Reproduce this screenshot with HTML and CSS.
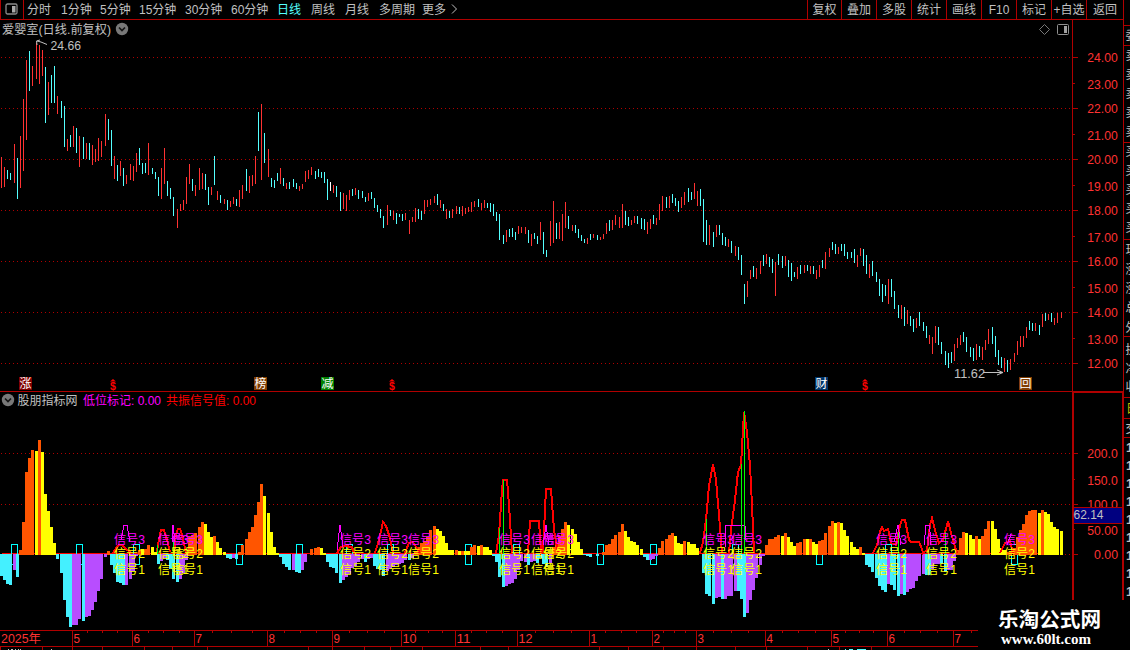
FILE: index.html
```html
<!DOCTYPE html>
<html lang="zh">
<head>
<meta charset="utf-8">
<title>爱婴室 日线</title>
<link rel="stylesheet" href="styles.css">
</head>
<body>
<div class="app">
  <div class="main">
    <header class="toolbar">
      <div class="toggle"><svg width="14" height="12" viewBox="0 0 14 12"><rect x="1" y="1" width="11" height="10" rx="1.5" fill="none" stroke="#8a8a8a" stroke-width="1.3"/><rect x="7" y="3" width="3.5" height="6.5" fill="#aaa"/></svg></div>
      <nav class="periods">
        <span class="p2">分时</span><span class="p3">1分钟</span><span class="p3">5分钟</span><span class="p4">15分钟</span><span class="p4">30分钟</span><span class="p4">60分钟</span><span class="p2 active">日线</span><span class="p2">周线</span><span class="p2">月线</span><span class="p5">多周期</span><span class="p6">更多</span><svg width="7" height="11" viewBox="0 0 7 11"><path d="M1 .5L5.5 5L1 9.5" fill="none" stroke="#c0c0c0"/></svg>
      </nav>
      <div class="actions"><span>复权</span><span>叠加</span><span>多股</span><span>统计</span><span>画线</span><span>F10</span><span>标记</span><span>+自选</span><span>返回</span></div>
    </header>
    <svg class="chart" id="price" width="1123" height="371" viewBox="0 20 1123 371"></svg>
    <svg class="chart" id="indicator" width="1123" height="259" viewBox="0 391 1123 259"></svg>
  </div>
  <svg class="chart" id="side" width="7" height="650" viewBox="1123 0 7 650"></svg>
</div>
<script src="chart.js"></script>
</body>
</html>
```

FILE: styles.css
```css
body {
  margin: 0;
  background: #000;
  overflow: hidden;
}
.app {
  display: flex;
  width: 1130px;
  height: 650px;
  font: 12px "Liberation Sans", "Noto Sans CJK SC", sans-serif;
  color: #c0c0c0;
}
.main {
  display: flex;
  flex-direction: column;
  width: 1123px;
}
.toolbar {
  display: flex;
  box-sizing: border-box;
  height: 20px;
  border-bottom: 1px solid #b00000;
  line-height: 20px;
  white-space: nowrap;
}
.toggle {
  display: flex;
  box-sizing: border-box;
  width: 24px;
  padding: 3px 0 0 4px;
  border-left: 1px solid #b00000;
  border-right: 1px solid #b00000;
}
.periods {
  display: flex;
  flex: 1;
  padding-left: 3px;
}
.periods svg { margin-top: 4px; }
.p2 { width: 34px; }
.p3 { width: 39px; }
.p4 { width: 46px; }
.p5 { width: 43px; }
.p6 { width: 29px; }
.active { color: #54ffff; }
.actions { display: flex; }
.actions span {
  box-sizing: border-box;
  width: 35px;
  height: 19px;
  border-left: 1px solid #b00000;
  text-align: center;
}
.actions span:first-child { width: 34px; }
.actions span:last-child { width: 37px; }
.chart {
  display: block;
  flex: none;
}
.dots {
  stroke: #b00000;
  stroke-dasharray: 1 3;
}
.num { font-size: 13px; }
.tick { font: bold 13px "Liberation Sans", sans-serif; }
.crisp { shape-rendering: crispEdges; }
.mark {
  font: bold 20.6px "Noto Sans CJK SC", sans-serif;
}
.site {
  font: bold 14.5px "Liberation Serif", serif;
}
```

FILE: chart.js
```js
// Daily ranges: colour, x, top, bottom
const candles = `r1,157,188 r4,167,187 c7,170,179 c10,173,180 r14,144,183 c17,158,199 r20,136,188 r23,99,171 r26,60,140 c29,51,91 r32,66,86 r36,43,79 r39,45,84 r42,50,76 c45,67,123 r48,82,115 c51,75,103 c54,66,103 r57,96,114 c61,101,118 c64,106,147 r67,139,151 c70,135,147 r73,126,147 c76,128,153 r79,136,167 c83,137,159 r86,143,159 c89,143,160 r92,145,165 r95,149,162 r98,138,161 r101,141,157 r105,114,146 c108,119,140 c111,130,166 r114,156,179 c117,165,181 r120,161,176 c123,168,186 r126,175,184 r130,164,180 r133,166,181 r136,153,172 c139,148,165 c142,163,174 c145,163,173 r148,143,175 c152,168,174 c155,172,179 c158,177,196 r161,168,199 r164,148,184 c167,181,196 c170,188,199 c173,197,216 r177,209,228 r180,204,211 r183,200,210 r186,177,204 r189,164,184 c192,179,191 r195,185,196 r199,168,190 r202,173,189 c205,174,190 c208,187,205 r211,187,195 c214,156,185 r217,191,200 c220,195,203 r224,199,204 c227,200,210 r230,201,207 r233,197,204 c236,199,206 r239,190,207 r242,185,199 c246,169,191 r249,176,193 r252,175,186 r255,156,184 c258,112,151 r261,104,180 c264,133,163 r268,149,177 c271,178,187 c274,180,188 c277,173,181 r280,168,184 c283,178,186 r286,183,189 c289,182,189 c293,179,187 c296,183,189 r299,186,191 r302,184,189 r305,171,182 r308,170,179 r311,167,175 c315,171,179 c318,169,177 c321,172,178 c324,172,183 c327,179,200 w330,182,191 r333,185,193 c336,186,197 c340,192,211 r343,193,209 r346,195,211 r349,190,200 c352,189,196 r355,188,195 c358,190,199 c362,191,198 c365,197,202 r368,193,201 c371,192,199 c374,198,208 c377,205,212
c380,209,218 c383,216,228 r387,205,225 c390,210,216 r393,211,220 c396,213,224 c399,214,217 c402,214,221 r405,213,220 r409,220,234 r412,217,222 r415,208,222 c418,209,219 c421,211,220 r424,200,214 r427,200,207 r430,199,205 r434,196,203 c437,194,205 r440,200,208 c443,204,211 r446,209,219 c449,211,218 r452,209,218 r456,206,214 c459,207,214 r462,206,216 r465,208,214 r468,207,212 r471,202,212 r474,201,207 c478,199,207 r481,203,210 r484,200,208 c487,203,208 c490,203,212 c493,204,216 c496,212,221 c499,214,240 c503,235,244 r506,230,242 c509,229,237 c512,228,237 c515,232,240 r518,226,234 r521,227,233 r525,227,234 c528,230,243 r531,234,246 c534,233,239 c537,236,244 r540,222,240 c543,232,254 c546,250,257 r550,221,246 r553,201,243 c556,223,239 r559,222,239 r562,214,241 r565,202,228 c568,216,229 r572,225,231 c575,225,233 c578,229,238 c581,235,241 c584,239,243 r587,238,244 c590,234,240 r593,234,238 c597,235,240 r600,237,240 r603,234,239 r606,223,234 c609,220,231 r612,220,230 r615,215,225 r619,217,228 r622,204,228 c625,211,225 c628,217,226 r631,220,225 r634,216,223 c637,216,224 c641,218,229 c644,219,230 r647,222,234 r650,219,229 c653,215,224 r656,218,225 r659,204,220 r662,196,211 c666,197,208 r669,196,208 c672,194,203 c675,198,206 c678,201,212 r681,197,208 r684,192,205 c688,188,202 c691,192,200 r694,183,199 r697,191,206 c700,189,206 c703,199,242 c706,220,245 r709,225,245 c713,232,247 r716,225,237 c719,225,235 c722,233,245 c725,237,246 r728,239,247 c731,241,253 r735,246,256
c738,247,260 c741,255,275 c744,284,304 r747,281,297 r750,270,279 c753,266,277 r756,268,279 r760,261,274 c763,255,266 r766,254,264 c769,257,267 c772,259,273 r775,262,296 c778,254,265 c782,256,268 r785,256,266 c788,260,277 c791,263,281 c794,272,277 r797,267,279 c800,265,274 r804,265,273 c807,265,271 r810,266,274 c813,266,274 r816,270,279 r819,265,277 c822,260,268 r825,252,269 r829,248,257 c832,242,250 c835,244,254 r838,247,254 c841,244,251 c844,244,256 c847,252,259 c851,252,258 c854,249,263 r857,255,267 r860,248,256 c863,249,266 c866,255,274 r869,264,278 c872,261,276 c876,272,282 c879,279,296 c882,284,302 c885,285,296 r888,279,304 c891,279,297 c894,291,309 c898,305,318 r901,305,319 c904,307,326 r907,310,324 c910,316,326 c913,319,332 r916,318,328 c919,312,326 c923,322,331 c926,326,338 r929,335,344 r932,337,354 r935,326,343 c938,327,345 c941,342,354 c945,351,365 c948,353,368 c951,352,363 r954,344,361 r957,338,348 r960,335,345 c963,332,342 c966,337,352 c970,347,357 c973,348,361 r976,344,360 c979,346,357 r982,347,360 r985,340,350 r988,329,344 c992,327,344 c995,336,357 c998,350,365 c1001,357,368 r1004,358,372 c1007,360,372 r1010,359,370 r1014,353,362 r1017,341,355 r1020,336,347 r1023,336,347 r1026,327,338 c1029,321,330 c1032,323,331 r1035,323,331 c1039,325,335 r1042,314,327 c1045,313,321 r1048,314,320 c1051,313,322 r1054,318,325 r1057,313,323 r1061,312,318`;

// Histogram: colour, x, far end (o/y rise above zero, c/p fall below)
const bars = `c1,576 c4,580 c7,584 c10,585 p14,570 c17,577 o20,550 o23,522 o26,472 o29,458 o32,450 y36,451 o39,440 y42,452 y45,494 y48,511 y51,527 y54,543 c57,559 c61,573 c64,600 c67,617 c70,627 p73,625 p76,625 p79,619 c83,621 p86,617 p89,616 p92,610 p95,602 p98,591 p101,579 p105,557 o108,551 c111,565 c114,573 c117,582 c120,583 c123,585 p126,585 p130,579 p133,571 p136,556 o139,550 y142,549 o145,549 o148,545 y152,547 y155,552 c158,564 p161,561 p164,558 c167,560 c170,569 c173,579 c177,582 p180,579 p183,573 p186,560 o189,537 o192,535 o195,533 o199,527 o202,522 y205,524 y208,532 y211,537 o214,536 y217,542 y220,548 y224,552 c227,558 c230,559 p233,558 c236,559 o239,552 o242,545 o246,539 o249,532 o252,527 o255,515 o258,502 o261,484 y264,496 y268,513 y271,532 y274,547 y277,553 c280,557 c283,564 c286,567 c289,570 p293,570 c296,572 c299,573 p302,570 p305,562 o311,549 o315,548 o318,547 y321,548 y324,553 c327,562 c330,567 c333,568 c336,573 c340,583 p343,580 p346,577 p349,574 p352,568 p355,566 p358,562 p362,559 c365,562 p368,559 p371,558 c374,566 c377,569 c380,570 c383,576 p387,571 p390,569 p393,567 p396,565 p399,564 p402,563 p405,560 c409,560 p412,558 o415,551 o418,547 o421,543 o424,541 o427,537 o430,530 o434,526 y437,529 y440,531 y443,536 y446,543 y449,550 y452,550 o456,550 y459,551 o462,551 y465,551 y468,551 o471,547 o474,545 y478,546 o481,545 y484,547 y487,547 y490,550 c493,556 c496,562 c499,577 c503,587 p506,586 p509,584 p512,583 p515,579 p518,570 p521,561 p525,562 c528,565 p531,562 p534,561 c537,563 c540,558 c543,564 c546,567 p550,563 o553,547 o556,543 o559,537 o562,529 o565,522 y568,525 y572,529 y575,534 y578,542 y581,549 c584,555 c587,556 c590,557 c597,556 o603,552 o606,545 o609,544 o612,539 o615,535 o619,532 o622,524 y625,531 y628,537 y631,541 y634,542 y637,545 y641,549 c644,557 c647,560 p650,560 p653,559 p656,556 o659,548 o662,541 o666,539 o669,535 o672,533 y675,536 y678,543 y681,544 o684,541 y688,542 y691,544 y694,544 y697,548 c703,573 c706,594 c709,596 c713,604 p716,598 p719,597 c722,599 p725,599 p728,596 p731,596 p735,591 c738,591 c741,599 c744,617 p747,613 p750,600 p753,590 p756,578 p760,565 p763,556 o766,545 o769,539 o772,539 o775,537 o778,535 y782,536 o785,533 y788,537 y791,542 y794,546 o797,543 o800,542 o804,539 y807,539 o810,539 y813,542 y816,544 o819,541 o822,540 o825,533 o829,526 o832,521 y835,523 o838,522 y841,523 y844,530 y847,536 y851,542 y854,547 y857,549 o860,547 y863,553 c866,565 c869,567 c872,572 c876,578 c879,586 c882,590 c885,592 p888,584 c891,585 c894,590 c898,596 p901,594 c904,595 p907,592 p910,589 p913,588 p916,581 p919,576 p923,574 c926,575 c929,575 p932,569 p935,564 p938,564 c941,564 c945,572 p948,570 p951,570 p954,561 o957,550 o960,538 o963,532 y966,533 y970,535 y973,539 o976,536 y979,539 o982,536 o985,529 o988,521 y992,521 y995,529 y998,539 y1001,548 y1004,550 o1007,552 o1010,551 o1014,548 o1017,537 o1020,530 o1023,524 o1026,515 o1029,511 o1032,510 o1035,510 y1039,513 o1042,510 y1045,512 y1048,514 y1051,522 y1054,527 y1057,529 y1061,531`;

const parse = s => s.split(/\s+/).map(t => [t[0], ...t.slice(1).split(',').map(Number)]);
const box = (x, y, w, h, f) => `<rect x="${x}" y="${y}" width="${w}" height="${h}" fill="${f}"/>`;
const frame = (x, y, w, h) => box(x, y, w, h, '#b00000');
const text = (x, y, s, f, w, c = '') =>
  `<text x="${x}" y="${y}" fill="${f}" class="${c}"${w ? ` textLength="${w}" lengthAdjust="spacingAndGlyphs"` : ''}>${s}</text>`;
const dots = (y, x = 1) => `<line class="dots" x1="${x}" y1="${y}.5" x2="1071" y2="${y}.5"/>`;
const line = (pts, c, w = 1) => `<polyline points="${pts}" fill="none" stroke="${c}" stroke-width="${w}"/>`;
const chevron = (x, y) =>
  `<circle cx="${x}" cy="${y}" r="6.2" fill="#787878"/><path d="M${x - 3} ${y - 1.5}l3 3l3 -3" fill="none" stroke="#151515" stroke-width="1.7"/>`;
const RED = '#ff3232', GREY = '#c0c0c0';

// Price panel
let p = '<g class="crisp">';
for (let k = 0; k < 7; k++) {
  const y = 57 + 51 * k;
  p += dots(y) + frame(1073, y, 5, 1);
  if (k < 6) p += frame(1073, y + 26, 2, 1);
}
const cc = { r: RED, c: '#54ffff', w: '#fff' };
for (const [c, x, a, b] of parse(candles)) p += box(x, a, 1, b - a, cc[c]);
p += frame(1072, 20, 1, 371) + '</g>';
for (let k = 0; k < 13; k++) {
  const y = 62 + 51 * Math.floor(k / 2) + (k % 2 ? 27 : 0);
  p += text(1087.3, y, `${24 - k}.00`, RED, 30.5, 'num');
}
p += text(2, 34, '爱婴室(日线.前复权)', GREY, 109) + chevron(122, 29);
p += text(50.5, 50, '24.66', GREY, 30.5, 'num') + line('37,45 36.5,41 40,40', GREY) + line('37,41 41,42 47,44.5', GREY);
p += text(954, 378, '11.62', GREY, 31, 'num') + line('983,372.5 1003,372.5', GREY) + line('997,370 1003,372.5 997,375', GREY);
p += '<path d="M1044.500 24.500l5 5l-5 5l-5 -5z" fill="none" stroke="#787878"/>';
p += '<rect x="1057.500" y="24.500" width="11" height="10" rx="1" fill="none" stroke="#909090"/>' + box(1064, 26, 3, 7, '#a0a0a0');
for (const [x, s, f] of [[19, '涨', '#800000'], [254, '榜', '#803c00'], [321, '减', '#008000'], [815, '财', '#003468'], [1019, '回', '#803c00']])
  p += box(x, 377, 13, 13, f) + text(x + .5, 388, s, '#fff');
for (const x of [113, 392, 865])
  p += `<path d="M${x - 3} 381.500l3 -2.500l3 2.500z" fill="red"/>` + `<text x="${x}" y="390" fill="red" text-anchor="middle" font-size="10.500" font-weight="bold">$</text>`;
document.getElementById('price').innerHTML = p;

// Indicator panel
let q = '<g class="crisp">' + dots(453) + dots(504) + dots(554, 1065) + box(2, 553, 1055, 1, 'red');
for (const x of [11, 76, 133, 236, 296, 346, 387, 465, 513, 597, 650, 732, 816, 885, 1011])
  q += `<rect x="${x}.5" y="544.5" width="6" height="20" fill="none" stroke="#00ffff"/>`;
const bc = { o: '#ff5500', y: '#ffff00', c: '#44f0ff', p: '#b84dff' };
for (const [c, x, e] of parse(bars)) {
  const up = c === 'o' || c === 'y';
  q += up ? box(x - 1, e, 3, 555 - e, bc[c]) : box(x - 1, 554, 3, e - 554, bc[c]);
}
for (const s of [
  '113,553 117,547 119,545 122,545 126,549 131,553',
  '157,552 158,545 160,534 161,530 164,530 167,540 170,552',
  '174,552 176,534 178,529 180,529 182,534 186,553',
  '337,553 341,547 345,546 352,547 354,553',
  '375,553 379,540 383,522 386,526 390,538 393,553',
  '405,553 409,543 413,542 416,547 420,553',
  '496,553 499,535 502,490 503,480 507,480 509,505 512,553',
  '528,553 530,521 539,521 541,553 543,551 546,489 551,489 554,530 558,553',
  '700,553 703,542 706,520 709,486 713,464 716,480 719,515 722,553',
  '729,553 731,530 735,500 738,472 741,465 744,412 747,432 750,465 752,505 754,553',
  '873,553 877,545 880,532 882,527 884,531 888,529 891,543 896,545 900,525 902,520 905,520 909,540 911,542 919,542 922,549 923,553 927,550 930,525 932,518 935,530 939,543 943,540 948,521 951,533 956,550 957,553',
  '1000,553 1005,543 1010,541 1013,553']) q += line(s, 'red', 2);
for (const s of ['121,540 124,525 127,525 130,542', '172,542 173,525 175,542', '337,550 340,525 343,547', '543,545 546,525 549,545', '725,548 725.500,525.500 745,525.500 746,540', '894,542 898,525 901,545', '924,545 926,525.500 929.500,525.500 931,545', '1007,545 1011,534'])
  q += line(s, '#ff00ff');
for (const [x, y] of [[157, 545], [173, 540], [499, 528], [503, 480], [706, 519], [741, 464], [744, 411], [898, 532], [945, 532]])
  q += box(x, y, 1, 554 - y, '#00ff00');
q += '</g>';
for (const x of [114, 158, 172, 340, 377, 408, 499, 531, 543, 703, 731, 876, 926, 1004]) {
  q += text(x, 544, '信号3', '#ff00ff', 31);
  q += text(x, 558, '信号2', '#ffff00', 31);
  q += text(x, 574, '信号1', '#ffff00', 31);
}
q += chevron(8, 400) + text(17.5, 404.5, '股朋指标网', GREY, 60);
q += text(83, 404.5, '低位标记: 0.00', '#ff00ff', 78) + text(166, 404.5, '共振信号值: 0.00', 'red', 90);

// Value axis
for (const [y, s, x, w] of [[458, '200.0', 1087.3, 30.5], [485, '150.0', 1087.3, 30.5], [509, '100.0', 1087.3, 30.5], [535, '50.00', 1087.3, 30.5], [559, '0.00', 1094, 24]])
  q += text(x, y, s, RED, w, 'num');
q += '<g class="crisp">' + frame(0, 391, 1123, 1) + frame(1072, 391, 2, 209) + frame(1073, 391, 50, 2) + frame(1122, 391, 1, 209);
for (const y of [453, 504, 554]) q += frame(1074, y, 4, 1);
for (const y of [479, 529]) q += frame(1074, y, 1, 1);
q += box(1074, 507, 48, 17, '#000080') + frame(1074, 507, 48, 1) + frame(1074, 523, 48, 1);

// Date axis
q += frame(0, 630, 978, 1) + frame(0, 646, 978, 1);
const months = [[72, 5], [132, 6], [194, 7], [267, 8], [332, 9], [401, 10], [455, 11], [517, 12], [589, 1], [652, 2], [696, 3], [765, 4], [831, 5], [887, 6], [953, 7]];
for (const [x] of months) q += frame(x, 630, 1, 17);
for (const x of [87, 102, 117, 148, 163, 179, 212, 231, 252, 284, 300, 316, 349, 367, 384, 415, 428, 442, 471, 486, 502, 535, 553, 571, 605, 621, 636, 663, 674, 685, 713, 731, 748, 782, 798, 815, 845, 859, 873, 904, 920, 937, 971]) q += frame(x, 631, 1, 2);
for (const x of [0, 42, 72, 102, 144, 172, 207, 308, 332, 364, 390, 422, 480, 508, 599, 628, 663, 696, 735, 766, 807, 839, 871]) q += frame(x, 647, 1, 3);
for (const [x, w] of [[8, 1], [11, 2], [15, 1], [18, 1], [20, 1], [51, 1], [828, 1]]) q += box(x, 649, w, 1, GREY);
for (const [x, w] of [[845, 1], [849, 4], [857, 9]]) q += box(x, 649, w, 1, '#54ffff');
q += '</g>' + text(1073.5, 519, '62.14', GREY, 30, 'num') + text(1, 643, '2025年', RED, 40);
for (const [x, n] of months) q += text(x + 1.5, 643, n, RED, n > 9 ? 14 : 6.5, 'num');
q += text(998, 627, '乐淘公式网', '#fff', 103, 'mark') + text(1001, 644, 'www.60lt.com', '#fff', 90, 'site');
document.getElementById('indicator').innerHTML = q;

// Quote column, cut off by the window edge
let s = '<g class="crisp">' + frame(1123, 0, 1, 600);
for (const y of [25, 45, 142, 239, 336, 397, 418, 437]) s += frame(1124, y, 6, 1);
s += '</g>';
[[40, '委'], [60, '卖'], [79, '卖'], [98, '卖'], [117, '卖'], [136, '卖'], [156, '买'], [175, '买'], [194, '买'], [213, '买'], [232, '买'], [254, '现'], [274, '涨'], [293, '涨'], [312, '总'], [332, '外'], [354, '换'], [373, '净'], [391, '收'], [433, '交']]
  .forEach(([y, c]) => s += text(1125.5, y, c, GREY));
s += text(1126, 413, '日', '#c0c000');
for (let y = 452; y < 598; y += 18) s += text(1126, y, '1', GREY, 0, 'tick');
document.getElementById('side').innerHTML = s;
```
